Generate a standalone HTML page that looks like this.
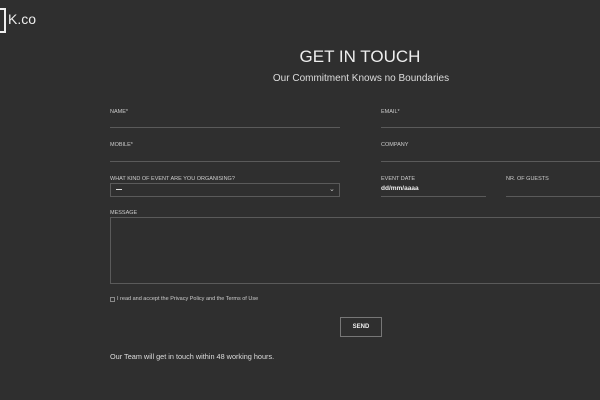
<!DOCTYPE html>
<html><head><style>
body{margin:0;width:600px;height:400px;background:#2f2f2f;font-family:"Liberation Sans",sans-serif;color:#ddd;position:relative;overflow:hidden}
.a{position:absolute}
.lbl{font-size:5.5px;color:#ccc;letter-spacing:0}
.line{height:1px;background:#5a5a5a}
</style></head><body>
<div class="a" style="left:-6px;top:8px;width:10px;height:21px;border:2px solid #eee;border-left:none"></div>
<div class="a" style="left:8px;top:11px;font-size:14px;color:#eee">K.co</div>
<div class="a" style="left:0;width:720px;top:47px;text-align:center;font-size:17px;color:#eee">GET IN TOUCH</div>
<div class="a" style="left:0;width:722px;top:73px;text-align:center;font-size:10px;color:#ddd">Our Commitment Knows no Boundaries</div>

<div class="a lbl" style="left:110px;top:109px">NAME*</div>
<div class="a line" style="left:110px;top:127px;width:230px"></div>
<div class="a lbl" style="left:381px;top:109px">EMAIL*</div>
<div class="a line" style="left:381px;top:127px;width:219px"></div>

<div class="a lbl" style="left:110px;top:142px">MOBILE*</div>
<div class="a line" style="left:110px;top:161px;width:230px"></div>
<div class="a lbl" style="left:381px;top:142px">COMPANY</div>
<div class="a line" style="left:381px;top:161px;width:219px"></div>

<div class="a lbl" style="left:110px;top:176px">WHAT KIND OF EVENT ARE YOU ORGANISING?</div>
<div class="a" style="left:110px;top:183px;width:228px;height:12px;border:1px solid #5a5a5a"></div>
<div class="a" style="left:116px;top:189px;width:6px;height:1px;background:#ddd"></div>
<div class="a" style="left:329px;top:185px;font-size:7px;color:#ccc">&#8964;</div>
<div class="a lbl" style="left:381px;top:176px">EVENT DATE</div>
<div class="a" style="left:381px;top:185px;font-size:6.5px;color:#eee;font-weight:bold">dd/mm/aaaa</div>
<div class="a line" style="left:381px;top:196px;width:105px"></div>
<div class="a lbl" style="left:506px;top:176px">NR. OF GUESTS</div>
<div class="a line" style="left:506px;top:196px;width:94px"></div>

<div class="a lbl" style="left:110px;top:210px">MESSAGE</div>
<div class="a" style="left:110px;top:217px;width:500px;height:65px;border:1px solid #5a5a5a"></div>

<div class="a" style="left:110px;top:297px;width:3px;height:3px;border:1px solid #888"></div>
<div class="a" style="left:117px;top:296px;font-size:5.5px;color:#ccc">I read and accept the Privacy Policy and the Terms of Use</div>

<div class="a" style="left:340px;top:317px;width:40px;height:18px;border:1px solid #777;font-size:6px;color:#eee;text-align:center;line-height:18px;font-weight:bold">SEND</div>

<div class="a" style="left:110px;top:352px;font-size:7.3px;color:#ddd">Our Team will get in touch within 48 working hours.</div>
</body></html>
